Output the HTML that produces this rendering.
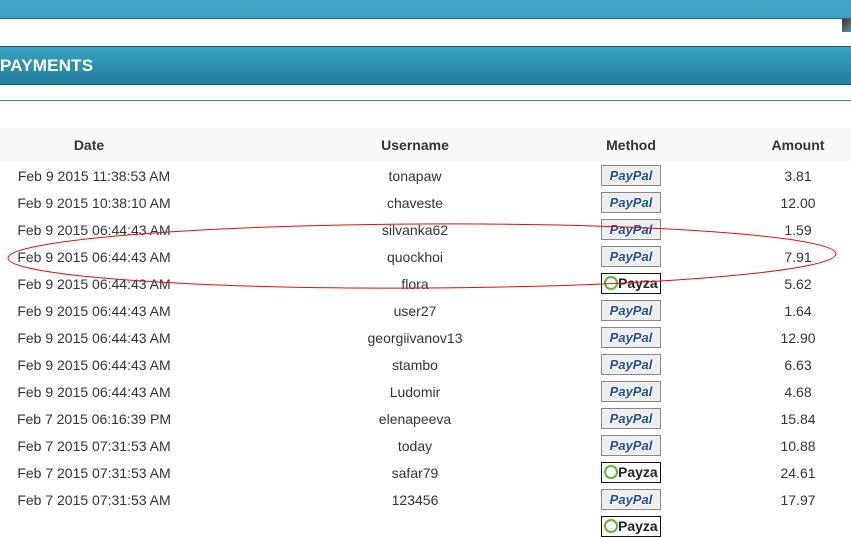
<!DOCTYPE html>
<html><head><meta charset="utf-8"><style>
*{margin:0;padding:0;box-sizing:border-box}
body{width:851px;height:519px;overflow:hidden;background:#fff;font-family:"Liberation Sans",Arial,sans-serif;position:relative;color:#333}
.top{position:absolute;left:0;top:0;width:851px;height:19px;background:linear-gradient(#43a6c9,#3d9ec2);border-bottom:1px solid #1f6f8e}
.hdr{position:absolute;left:0;top:46px;width:851px;height:39px;background:linear-gradient(#3aa2c2,#237e9d);border-top:1px solid #1d5f78;border-bottom:1px solid #1b5e78;color:#fff;font-size:17px;font-weight:bold;line-height:38px;letter-spacing:0.2px}
.line{position:absolute;left:0;top:100px;width:851px;height:1px;background:#2a8fa8}
.th{position:absolute;left:0;top:128px;width:851px;height:33px;background:#f8f8f8}
.c{position:absolute;font-size:14px;transform:translateX(-50%);white-space:nowrap}
.h{font-weight:bold;color:#333;font-size:14px}
.pp{position:absolute;left:601px;width:60px;height:21px;background:#eee;border:1px solid #888;font:italic bold 13px "Liberation Sans",sans-serif;color:#1e4f9c;text-align:center;line-height:19px;text-shadow:0 0 1px #fff,1px 1px 0 #fff}
.pz{position:absolute;left:601px;width:60px;height:21px;background:#fff;border:1px solid #111;font:bold 14px "Liberation Sans",sans-serif;color:#222;line-height:19px;padding-left:16px}
.pz:before{content:"";position:absolute;left:2px;top:2px;width:10px;height:10px;border:2px solid #5bb63a;border-radius:50%}
</style></head><body>
<div class="top"></div>
<div style="position:absolute;left:842px;top:19px;width:9px;height:13px;background:linear-gradient(135deg,#333,#666 60%,#39c)"></div>
<div class="hdr">PAYMENTS</div>
<div class="line"></div>
<div class="th"></div>
<div class="c h" style="left:89px;top:137px">Date</div>
<div class="c h" style="left:415px;top:137px">Username</div>
<div class="c h" style="left:631px;top:137px">Method</div>
<div class="c h" style="left:798px;top:137px">Amount</div>
<div id="rows"></div>
<svg style="position:absolute;left:0;top:0" width="851" height="519"><ellipse cx="422" cy="256" rx="414" ry="32" transform="rotate(-0.3 422 256)" fill="none" stroke="#e01010" stroke-width="1"/></svg>
<script>
var d=[["Feb 9 2015 11:38:53 AM","tonapaw",0,"3.81"],["Feb 9 2015 10:38:10 AM","chaveste",0,"12.00"],["Feb 9 2015 06:44:43 AM","silvanka62",0,"1.59"],["Feb 9 2015 06:44:43 AM","quockhoi",0,"7.91"],["Feb 9 2015 06:44:43 AM","flora",1,"5.62"],["Feb 9 2015 06:44:43 AM","user27",0,"1.64"],["Feb 9 2015 06:44:43 AM","georgiivanov13",0,"12.90"],["Feb 9 2015 06:44:43 AM","stambo",0,"6.63"],["Feb 9 2015 06:44:43 AM","Ludomir",0,"4.68"],["Feb 7 2015 06:16:39 PM","elenapeeva",0,"15.84"],["Feb 7 2015 07:31:53 AM","today",0,"10.88"],["Feb 7 2015 07:31:53 AM","safar79",1,"24.61"],["Feb 7 2015 07:31:53 AM","123456",0,"17.97"],["","",1,""]];
var h="";d.forEach(function(r,i){var y=168+i*27;
h+='<div class="c" style="left:94px;top:'+y+'px">'+r[0]+'</div><div class="c" style="left:415px;top:'+y+'px">'+r[1]+'</div>';
h+=r[2]?'<div class="pz" style="top:'+(y-3)+'px">Payza</div>':'<div class="pp" style="top:'+(y-3)+'px">PayPal</div>';
h+='<div class="c" style="left:798px;top:'+y+'px">'+r[3]+'</div>';});
document.getElementById("rows").innerHTML=h;
</script>
</body></html>
